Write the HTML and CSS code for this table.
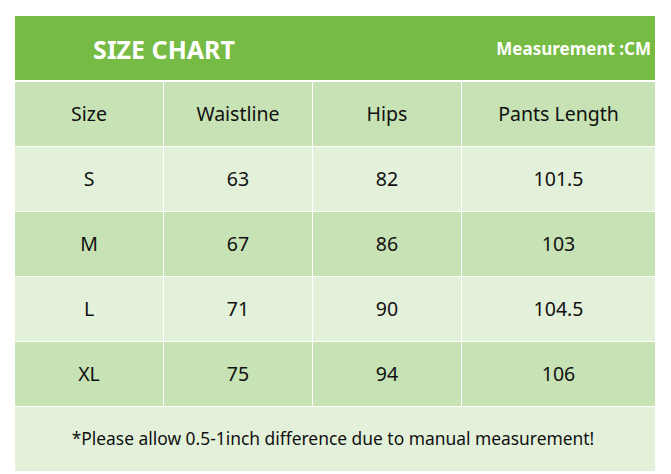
FILE: index.html
```html
<!DOCTYPE html>
<html>
<head>
<meta charset="utf-8">
<link rel="stylesheet" href="styles.css">
</head>
<body>
<div class="chart">
  <div class="banner">
    <div class="title">SIZE CHART</div>
    <div class="unit">Measurement :CM</div>
  </div>
  <div class="grid">
    <div class="cell head">Size</div>
    <div class="cell head">Waistline</div>
    <div class="cell head">Hips</div>
    <div class="cell head">Pants Length</div>

    <div class="cell light">S</div>
    <div class="cell light">63</div>
    <div class="cell light">82</div>
    <div class="cell light">101.5</div>

    <div class="cell dark">M</div>
    <div class="cell dark">67</div>
    <div class="cell dark">86</div>
    <div class="cell dark">103</div>

    <div class="cell light">L</div>
    <div class="cell light">71</div>
    <div class="cell light">90</div>
    <div class="cell light">104.5</div>

    <div class="cell dark">XL</div>
    <div class="cell dark">75</div>
    <div class="cell dark">94</div>
    <div class="cell dark">106</div>

    <div class="cell light note">*Please allow 0.5-1inch difference due to manual measurement!</div>
  </div>
</div>
</body>
</html>
```

FILE: styles.css
```css
html, body {
  margin: 0;
  padding: 0;
  background: #ffffff;
}
body {
  padding: 16px 0 0 15px;
  font-family: "Noto Sans", "Open Sans", sans-serif;
  color: #111111;
}
.chart {
  width: 640px;
}
.banner {
  height: 64px;
  background: #76bb43;
  display: grid;
  grid-template-columns: 298px 1fr;
  align-items: center;
  color: #ffffff;
  font-weight: 700;
}
.title {
  text-align: center;
  font-size: 25px;
  padding-top: 2px;
}
.unit {
  text-align: right;
  font-size: 17px;
  padding-right: 4px;
  padding-top: 1px;
}
.grid {
  margin-top: 2px;
  display: grid;
  grid-template-columns: 148px 148px 148px 193px;
  grid-auto-rows: 64px;
  column-gap: 1px;
  row-gap: 1px;
  background: #ffffff;
}
.cell {
  display: flex;
  align-items: center;
  justify-content: center;
  font-size: 19.5px;
  padding-bottom: 2px;
  box-sizing: border-box;
}
.head, .dark {
  background: #c7e2b4;
}
.light {
  background: #e3f0da;
}
.note {
  grid-column: 1 / -1;
  font-size: 17.4px;
  padding-right: 4px;
}
```
